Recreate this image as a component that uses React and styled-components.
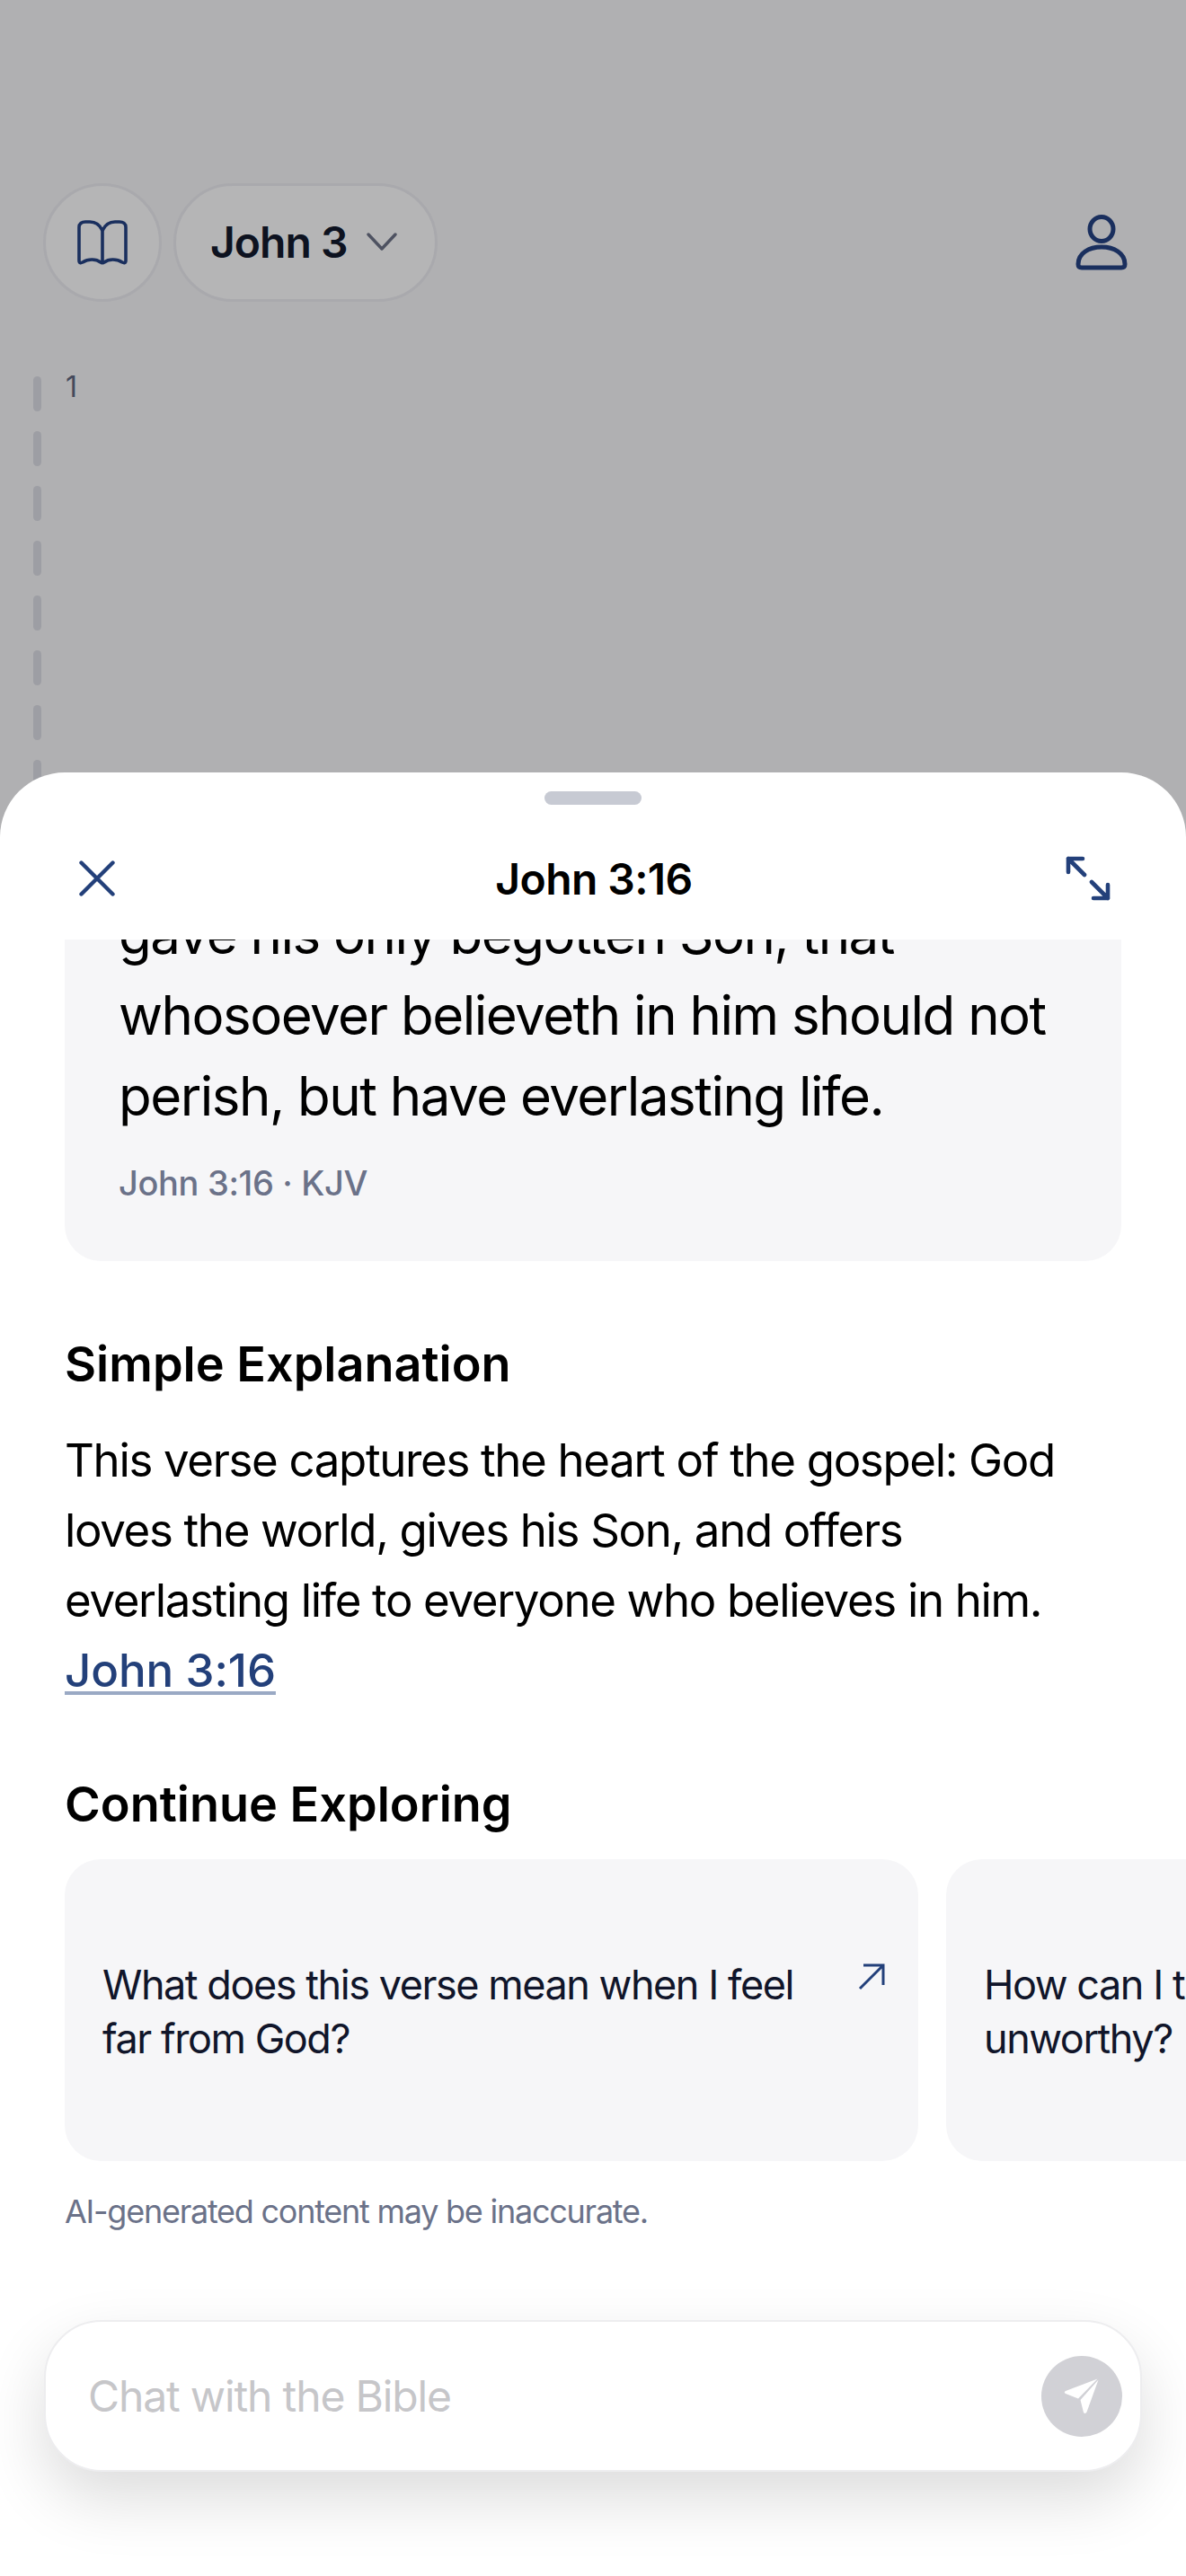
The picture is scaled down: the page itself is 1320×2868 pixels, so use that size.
import React from 'react';
import styled, { createGlobalStyle } from 'styled-components';

const Global = createGlobalStyle`
  html, body { margin: 0; padding: 0; background: #fff; }
  * { box-sizing: border-box; }
  body { font-family: Inter, "Liberation Sans", sans-serif; }
`;

const Page = styled.div`
  position: relative;
  width: 1320px;
  height: 2868px;
  overflow: hidden;
  background: #b0b0b2;
`;

const TopBar = styled.header`
  display: flex;
  align-items: center;
  padding: 204px 48px 0;
  gap: 13px;
`;

const RoundButton = styled.div`
  width: 132px;
  height: 132px;
  border-radius: 50%;
  background: #b5b5b6;
  border: 3px solid #a9a9ad;
  display: flex;
  align-items: center;
  justify-content: center;
`;

const ChapterPill = styled.div`
  width: 294px;
  height: 132px;
  border-radius: 66px;
  background: #b5b5b6;
  border: 3px solid #a9a9ad;
  display: flex;
  align-items: center;
  gap: 22px;
  padding: 0 0 2px 38px;
  font-size: 48px;
  font-weight: 600;
  letter-spacing: -1px;
  color: #0d1220;
`;

const ProfileLink = styled.div`
  margin-left: auto;
  margin-right: 17px;
  display: flex;
`;

const Reader = styled.div`
  display: flex;
  gap: 27px;
  padding: 83px 0 0 37px;
`;

const DashedRule = styled.div`
  display: flex;
  flex-direction: column;
  gap: 22px;
`;

const Dash = styled.span`
  width: 9px;
  height: 39px;
  border-radius: 5px;
  background: #9d9ea4;
`;

const VerseNumber = styled.span`
  font-size: 32px;
  line-height: 30px;
  margin-top: -3px;
  color: #454a5c;
`;

const Sheet = styled.section`
  position: absolute;
  left: 0;
  right: 0;
  top: 860px;
  bottom: 0;
  background: #fff;
  border-radius: 72px 72px 0 0;
  display: flex;
  flex-direction: column;
`;

const Handle = styled.div`
  width: 108px;
  height: 15px;
  border-radius: 8px;
  background: #c7cad3;
  margin: 21px auto 0;
  flex: none;
`;

const SheetHeader = styled.div`
  flex: none;
  height: 150px;
  display: flex;
  align-items: center;
  justify-content: space-between;
  padding: 14px 84px 0 88px;
`;

const SheetTitle = styled.h1`
  margin: 0 0 0 8px;
  font-size: 48px;
  font-weight: 600;
  letter-spacing: -0.6px;
  color: #000;
`;

const Scroller = styled.div`
  flex: none;
  height: 1482px;
  overflow: hidden;
  padding: 0 72px;
`;

const VerseCard = styled.div`
  margin-top: -201px;
  padding: 60px 60px 64px;
  background: #f6f6f8;
  border-radius: 40px;
`;

const VerseText = styled.p`
  margin: 0;
  font-size: 60px;
  line-height: 90px;
  letter-spacing: -1.5px;
  color: #000;
`;

const VerseRef = styled.div`
  margin-top: 29px;
  font-size: 38px;
  line-height: 46px;
  font-weight: 500;
  letter-spacing: -0.35px;
  color: #6b7289;
`;

const SectionTitle = styled.h2`
  margin: ${(p) => p.$top}px 0 0;
  font-size: 54px;
  line-height: 66px;
  font-weight: 600;
  color: #000;
`;

const Explanation = styled.p`
  margin: 35px 0 0;
  font-size: 51px;
  line-height: 78px;
  letter-spacing: -1.35px;
  color: #000;
`;

const VerseLink = styled.a`
  font-weight: 500;
  letter-spacing: -0.1px;
  color: #23407a;
  text-decoration: underline;
  text-decoration-color: #9aa9c4;
  text-decoration-thickness: 4px;
  text-underline-offset: 5px;
`;

const PromptRow = styled.div`
  display: flex;
  gap: 31px;
  margin-top: 28px;
  width: 1400px;
`;

const PromptCard = styled.div`
  flex: none;
  position: relative;
  width: 950px;
  height: 336px;
  background: #f6f6f8;
  border-radius: 40px;
  padding: 110px 120px 0 42px;
  font-size: 45px;
  line-height: 60px;
  letter-spacing: -1.45px;
  color: #10152a;
`;

const PromptArrow = styled.svg`
  position: absolute;
  left: 883px;
  top: 116px;
`;

const Disclaimer = styled.p`
  margin: 33px 0 0;
  font-size: 36px;
  line-height: 46px;
  letter-spacing: -1.25px;
  color: #6b7289;
`;

const Composer = styled.div`
  margin: 55px 49px 0;
  height: 169px;
  flex: none;
  background: #fff;
  border: 2px solid #ededef;
  border-radius: 64px;
  box-shadow: 0 30px 70px rgba(0, 0, 0, 0.14);
  display: flex;
  align-items: center;
  justify-content: space-between;
  padding: 0 20px 0 47px;
`;

const Placeholder = styled.span`
  font-size: 48px;
  letter-spacing: -1.15px;
  color: #c6c6c9;
`;

const SendButton = styled.div`
  width: 90px;
  height: 90px;
  border-radius: 50%;
  background: #d1d1d6;
  display: flex;
  align-items: center;
  justify-content: center;
`;

const BookIcon = () => (
  <svg width="56" height="50" viewBox="0 0 56 50" fill="none" stroke="#1a2f5e" strokeWidth="3.6" strokeLinecap="round" strokeLinejoin="round">
    <path d="M28 12C25 5 20 2 14 2H9C5 2 2 4 2 8V45C2 48 4 48 6 47C12 43 21 43 26 47C27 48 29 48 30 47C35 43 44 43 50 47C52 48 54 48 54 45V8C54 4 51 2 47 2H42C36 2 31 5 28 12V47" />
  </svg>
);

const Chevron = () => (
  <svg width="34" height="20" viewBox="0 0 34 20" fill="none" stroke="#4e5261" strokeWidth="3.4" strokeLinecap="round" strokeLinejoin="round">
    <path d="M2 2L17 18L32 2" />
  </svg>
);

const PersonIcon = () => (
  <svg width="58" height="62" viewBox="0 0 58 62" fill="none" stroke="#1a2f5e" strokeWidth="5" strokeLinejoin="round">
    <ellipse cx="29" cy="16" rx="13" ry="13.5" />
    <path d="M3 55C3 43 15 36 29 36C43 36 55 43 55 55C55 58 54 59 51 59H7C4 59 3 58 3 55Z" />
  </svg>
);

const CloseIcon = () => (
  <svg width="40" height="40" viewBox="0 0 40 40" fill="none" stroke="#23407a" strokeWidth="4.4" strokeLinecap="round">
    <path d="M2.5 2.5L37.5 37.5M37.5 2.5L2.5 37.5" />
  </svg>
);

const ExpandIcon = () => (
  <svg width="50" height="50" viewBox="0 0 50 50" fill="none" stroke="#23407a" strokeWidth="4.6" strokeLinecap="round" strokeLinejoin="round">
    <path d="M3 18V3H19M3 3L21 21M47 32V47H31M47 47L29 29" />
  </svg>
);

const SendIcon = () => (
  <svg width="42" height="44" viewBox="0 0 42 44" fill="#fff">
    <path d="M38.5 2.5L3 16Q0.5 17.5 3 19L17 24.5Z" />
    <path d="M39.5 3.5L19.5 26L23 40Q25 42 26.5 39.5Z" />
  </svg>
);

const dashes = [0, 1, 2, 3, 4, 5, 6, 7];

export default function App() {
  return (
    <Page>
      <Global />
      <TopBar>
        <RoundButton><BookIcon /></RoundButton>
        <ChapterPill>John 3 <Chevron /></ChapterPill>
        <ProfileLink><PersonIcon /></ProfileLink>
      </TopBar>
      <Reader>
        <DashedRule>
          {dashes.map((d) => <Dash key={d} />)}
        </DashedRule>
        <VerseNumber>1</VerseNumber>
      </Reader>

      <Sheet>
        <Handle />
        <SheetHeader>
          <CloseIcon />
          <SheetTitle>John 3:16</SheetTitle>
          <ExpandIcon />
        </SheetHeader>
        <Scroller>
          <VerseCard>
            <VerseText>
              For God so loved the world, that he gave his only begotten Son, that whosoever believeth in him should not perish, but have everlasting life.
            </VerseText>
            <VerseRef>John 3:16 · KJV</VerseRef>
          </VerseCard>
          <SectionTitle $top={82}>Simple Explanation</SectionTitle>
          <Explanation>
            This verse captures the heart of the gospel: God loves the world, gives his Son, and offers everlasting life to everyone who believes in him. <VerseLink>John 3:16</VerseLink>
          </Explanation>
          <SectionTitle $top={77}>Continue Exploring</SectionTitle>
          <PromptRow>
            <PromptCard>
              What does this verse mean when I feel far from God?
              <PromptArrow width="30" height="30" viewBox="0 0 30 30" fill="none" stroke="#23407a" strokeWidth="3">
                <path d="M6 2H28V24M28 2L2 28" />
              </PromptArrow>
            </PromptCard>
            <PromptCard>How can I trust God when I feel unworthy?</PromptCard>
          </PromptRow>
          <Disclaimer>AI-generated content may be inaccurate.</Disclaimer>
        </Scroller>
        <Composer>
          <Placeholder>Chat with the Bible</Placeholder>
          <SendButton><SendIcon /></SendButton>
        </Composer>
      </Sheet>
    </Page>
  );
}
